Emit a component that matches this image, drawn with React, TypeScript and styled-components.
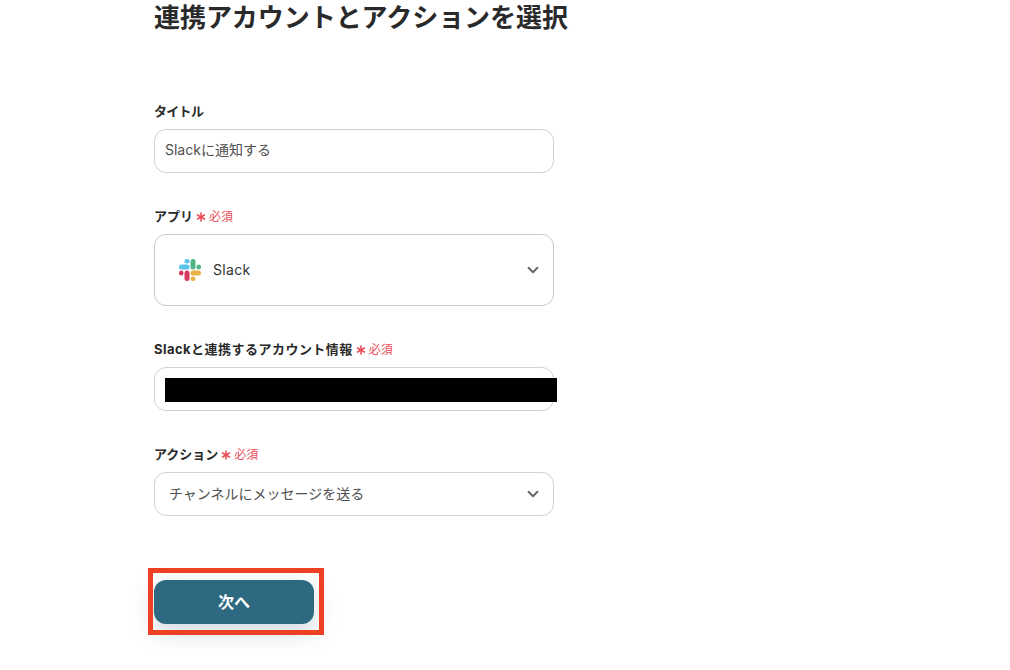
import React from 'react';
import styled, { createGlobalStyle } from 'styled-components';
import { Asterisk, ChevronDown } from 'lucide-react';

const GlobalStyle = createGlobalStyle`
	html,
	body {
		margin: 0;
		padding: 0;
		background-color: #fff;
		font-family: 'Inter', 'Noto Sans CJK JP', sans-serif;
	}
`;

const Page = styled.div`
	display: flex;
	flex-direction: column;
	width: 1010px;
	height: 670px;
	padding-left: 154px;
	box-sizing: border-box;
	overflow: hidden;
`;

const Heading = styled.h1`
	margin: 0 0 65px;
	height: 36px;
	font-size: 26px;
	line-height: 36px;
	font-weight: 600;
	letter-spacing: -0.05px;
	color: #2a2a2a;
`;

const Field = styled.div`
	display: flex;
	flex-direction: column;
	gap: 8px;
	width: 400px;
	margin-bottom: 33px;
`;

const Label = styled.div<{ $tracking?: number }>`
	display: flex;
	align-items: center;
	gap: 3px;
	height: 20px;
	font-size: 13px;
	line-height: 20px;
	font-weight: 700;
	letter-spacing: ${({ $tracking }) => $tracking ?? 0}px;
	color: #2a2a2a;
`;

const Required = styled.span`
	display: flex;
	align-items: center;
	margin-top: 1px;
	font-size: 12px;
	font-weight: 400;
	letter-spacing: 0;
	color: #ea4f5a;
`;

const RequiredIcon = styled(Asterisk)`
	flex: none;
	width: 16px;
	height: 16px;
	margin-left: -3px;
`;

const Control = styled.div<{ $tall?: boolean; $indent?: number }>`
	display: flex;
	align-items: center;
	justify-content: space-between;
	box-sizing: border-box;
	width: 400px;
	height: ${({ $tall }) => ($tall ? '72px' : '44px')};
	padding-left: ${({ $indent }) => $indent ?? 10}px;
	padding-right: 11px;
	background-color: #fff;
	border: 1px solid ${({ $tall }) => ($tall ? '#c9c9c9' : '#cdd2da')};
	border-radius: 12px;
	font-size: 14px;
	color: #505050;
`;

const ControlText = styled.span<{ $lift: number }>`
	margin-bottom: ${({ $lift }) => $lift}px;
`;

const AppName = styled.span`
	display: flex;
	align-items: center;
	gap: 12px;
	color: #333;
	letter-spacing: 0.3px;
`;

const Redaction = styled.div`
	flex: none;
	width: 392px;
	height: 24px;
	margin-top: 2px;
	background-color: #000;
`;

const ChevronIcon = styled(ChevronDown)`
	flex: none;
	width: 18px;
	height: 18px;
	color: #666;
`;

const ButtonWrap = styled.div`
	position: relative;
	width: 160px;
	margin-top: 31px;
`;

const NextButton = styled.button`
	display: block;
	width: 160px;
	height: 44px;
	padding: 0 0 2px;
	background-color: #2e6982;
	border: none;
	border-radius: 12px;
	box-shadow: 0 8px 24px rgba(46, 80, 100, 0.22);
	font-family: inherit;
	font-size: 16px;
	font-weight: 700;
	color: #fff;
`;

const Highlight = styled.div`
	position: absolute;
	top: -12px;
	left: -6px;
	width: 176px;
	height: 67px;
	box-sizing: border-box;
	border: 5px solid #ee4023;
`;

function SlackLogo(): React.JSX.Element {
	return (
		<svg width="22" height="22" viewBox="0 0 22 22">
			<rect x="0" y="5.5" width="10.5" height="5" rx="2.5" fill="#5cc3ec" />
			<rect x="5.5" y="0" width="5" height="4.5" rx="2.25" fill="#5cc3ec" />
			<rect x="11.5" y="0" width="5" height="10.5" rx="2.5" fill="#4fb583" />
			<rect x="17.5" y="5.5" width="4.5" height="5" rx="2.25" fill="#4fb583" />
			<rect x="5.5" y="11.5" width="5" height="10.5" rx="2.5" fill="#d5395f" />
			<rect x="0" y="11.5" width="4.5" height="5" rx="2.25" fill="#d5395f" />
			<rect x="11.5" y="11.5" width="10.5" height="5" rx="2.5" fill="#e6b445" />
			<rect x="11.5" y="17.5" width="5" height="4.5" rx="2.25" fill="#e6b445" />
		</svg>
	);
}

function RequiredMark(): React.JSX.Element {
	return (
		<Required>
			<RequiredIcon strokeWidth={2.4} />
			必須
		</Required>
	);
}

function App(): React.JSX.Element {
	return (
		<Page>
			<GlobalStyle />
			<Heading>連携アカウントとアクションを選択</Heading>
			<Field>
				<Label $tracking={-0.7}>タイトル</Label>
				<Control>
					<ControlText $lift={4}>Slackに通知する</ControlText>
				</Control>
			</Field>
			<Field>
				<Label>
					アプリ
					<RequiredMark />
				</Label>
				<Control $tall $indent={24}>
					<AppName>
						<SlackLogo />
						<ControlText $lift={2}>Slack</ControlText>
					</AppName>
					<ChevronIcon strokeWidth={2.5} />
				</Control>
			</Field>
			<Field>
				<Label $tracking={0.47}>
					Slackと連携するアカウント情報
					<RequiredMark />
				</Label>
				<Control>
					<Redaction />
				</Control>
			</Field>
			<Field>
				<Label>
					アクション
					<RequiredMark />
				</Label>
				<Control $indent={14}>
					<ControlText $lift={2}>チャンネルにメッセージを送る</ControlText>
					<ChevronIcon strokeWidth={2.5} />
				</Control>
			</Field>
			<ButtonWrap>
				<NextButton>次へ</NextButton>
				<Highlight />
			</ButtonWrap>
		</Page>
	);
}

export default App;
